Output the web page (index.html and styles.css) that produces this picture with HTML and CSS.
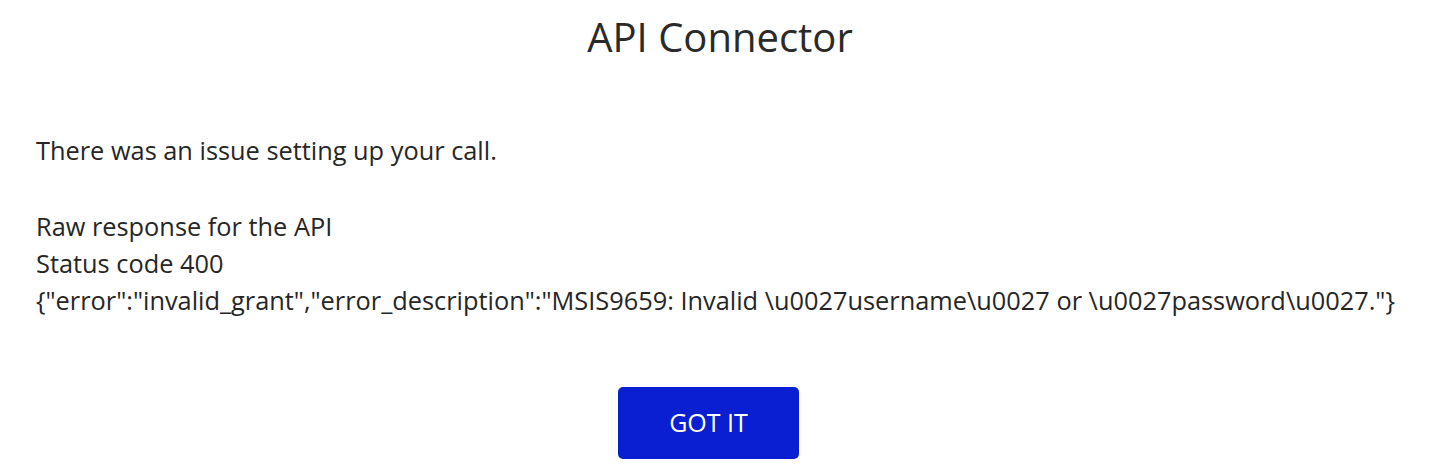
FILE: index.html
```html
<!DOCTYPE html>
<html>
<head>
<meta charset="utf-8">
<link rel="stylesheet" href="styles.css">
</head>
<body>
<div class="dialog">
  <h1 class="title">API Connector</h1>
  <div class="content">
    <p class="msg">There was an issue setting up your call.</p>
    <div class="raw">
      <div>Raw response for the API</div>
      <div>Status code 400</div>
      <div>{"error":"invalid_grant","error_description":"MSIS9659: Invalid \u0027username\u0027 or \u0027password\u0027."}</div>
    </div>
  </div>
  <div class="actions">
    <button class="btn">GOT IT</button>
  </div>
</div>
</body>
</html>
```
FILE: styles.css
```css
html, body {
  margin: 0;
  padding: 0;
  background: #fff;
}
body {
  font-family: "Open Sans", sans-serif;
  color: #222;
}
.dialog {
  display: flex;
  flex-direction: column;
}
.title {
  margin: 0;
  padding-top: 13px;
  text-align: center;
  font-size: 40px;
  font-weight: 400;
  line-height: 48px;
  color: #2a2a2a;
  padding-left: 9px;
}
.content {
  padding: 0 36px;
  font-size: 25.35px;
  line-height: 37px;
  margin-top: 71px;
  color: #262626;
}
.msg {
  margin: 0 0 39px;
}
.actions {
  display: flex;
  justify-content: center;
  margin-top: 68px;
}
.btn {
  width: 181px;
  height: 72px;
  background: #0a1fd1;
  color: #fff;
  border: none;
  border-radius: 5px;
  font-family: "Open Sans", sans-serif;
  font-size: 25px;
  margin-right: 14px;
  padding: 0 0 2px;
}
```
